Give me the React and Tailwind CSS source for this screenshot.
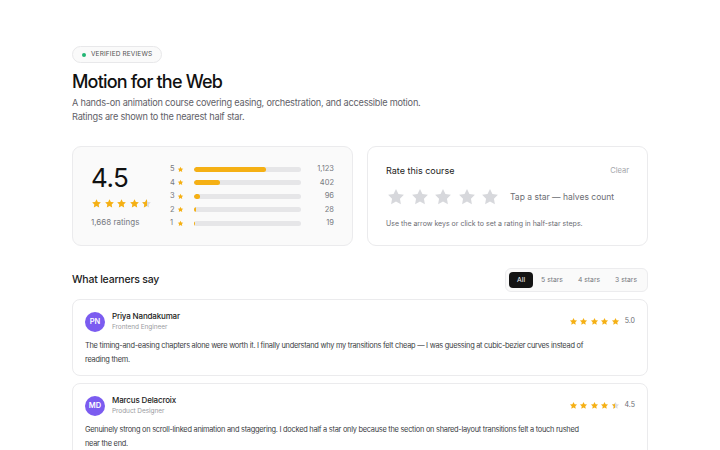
import React from "react";

const STAR = "M12 2.5l2.94 5.96 6.56.95-4.75 4.63 1.12 6.54L12 17.5l-5.870 3.08 1.12-6.54L2.5 9.41l6.56-.95L12 2.5z";

function Star({ size = 10, color = "#f5b014", half = false, empty = "#d9dbe0" }) {
  if (half) {
    return (
      <span className="relative block" style={{ width: size, height: size }}>
        <svg viewBox="0 0 24 24" width={size} height={size} className="absolute left-0 top-0">
          <path d={STAR} fill={empty} />
        </svg>
        <span className="absolute left-0 top-0 h-full overflow-hidden" style={{ width: size / 2 }}>
          <svg viewBox="0 0 24 24" width={size} height={size} className="block">
            <path d={STAR} fill={color} />
          </svg>
        </span>
      </span>
    );
  }
  return (
    <svg viewBox="0 0 24 24" width={size} height={size} className="block">
      <path d={STAR} fill={color} />
    </svg>
  );
}

function Stars({ value, size = 10, gap = "gap-[2px]" }) {
  const arr = [1, 2, 3, 4, 5];
  return (
    <div className={`flex items-center ${gap}`}>
      {arr.map((i) =>
        value >= i ? (
          <Star key={i} size={size} />
        ) : value >= i - 0.5 ? (
          <Star key={i} size={size} half />
        ) : (
          <Star key={i} size={size} color="#d9dbe0" />
        )
      )}
    </div>
  );
}

const hist = [
  { n: 5, c: "1,123", pct: 67.3 },
  { n: 4, c: "402", pct: 24.1 },
  { n: 3, c: "96", pct: 5.8 },
  { n: 2, c: "28", pct: 1.7 },
  { n: 1, c: "19", pct: 1.1 },
];

const reviews = [
  {
    init: "PN",
    name: "Priya Nandakumar",
    role: "Frontend Engineer",
    rating: 5,
    label: "5.0",
    text: "The timing-and-easing chapters alone were worth it. I finally understand why my transitions felt cheap — I was guessing at cubic-bezier curves instead of reading them.",
  },
  {
    init: "MD",
    name: "Marcus Delacroix",
    role: "Product Designer",
    rating: 4.5,
    label: "4.5",
    text: "Genuinely strong on scroll-linked animation and staggering. I docked half a star only because the section on shared-layout transitions felt a touch rushed near the end.",
  },
];

export default function App() {
  return (
    <div className="w-[720px] h-[450px] overflow-hidden bg-white text-[#111] font-['Inter','Liberation_Sans',sans-serif]">
      <div className="mx-auto w-[576px] pt-[46px]">
        <div className="flex w-fit items-center gap-[5px] rounded-full border border-[#e8e8ea] bg-[#fafafa] h-[17px] px-[9px]">
          <span className="w-[4px] h-[4px] rounded-full bg-[#22b573]" />
          <span className="text-[6.5px] tracking-[0.02em] text-[#555] uppercase leading-none">Verified reviews</span>
        </div>
        <h1 className="mt-[7px] text-[18px] leading-[24px] font-medium tracking-[-0.045em] text-[#111]">Motion for the Web</h1>
        <p className="mt-[2px] text-[9.2px] leading-[14px] tracking-[-0.025em] text-[#5f6168]">
          A hands-on animation course covering easing, orchestration, and accessible motion.
          <br />
          Ratings are shown to the nearest half star.
        </p>

        <div className="mt-[22px] grid grid-cols-2 gap-[14px]">
          <div className="h-[100px] rounded-[9px] border border-[#ebebed] bg-[#fafafa] flex items-center pl-[18px] pr-[18px]">
            <div className="w-[79px] flex flex-col">
              <div className="text-[26px] leading-[26px] font-normal tracking-[-0.02em] text-[#111]">4.5</div>
              <div className="mt-[7px]">
                <Stars value={4.5} size={11} gap="gap-[1.5px]" />
              </div>
              <div className="mt-[8px] text-[8px] leading-[10px] text-[#77797f]">1,668 ratings</div>
            </div>
            <div className="flex-1 flex flex-col gap-[4.5px]">
              {hist.map((h) => (
                <div key={h.n} className="flex items-center h-[9px]">
                  <span className="w-[6px] text-[7.5px] leading-none text-[#77797f]">{h.n}</span>
                  <span className="ml-[1px]">
                    <Star size={7} />
                  </span>
                  <div className="ml-[10px] w-[107px] h-[5px] rounded-full bg-[#e6e6e8] overflow-hidden">
                    <div className="h-full rounded-full bg-[#f5b014]" style={{ width: `${h.pct}%` }} />
                  </div>
                  <span className="flex-1 text-right text-[7.5px] leading-none text-[#77797f]">{h.c}</span>
                </div>
              ))}
            </div>
          </div>

          <div className="h-[100px] rounded-[9px] border border-[#ebebed] bg-white px-[18px] pt-[18px]">
            <div className="flex items-center justify-between">
              <span className="text-[9px] leading-[12px] text-[#222]">Rate this course</span>
              <span className="text-[7.5px] leading-[12px] text-[#a3a5aa]">Clear</span>
            </div>
            <div className="mt-[10px] flex items-center">
              <div className="flex items-center gap-[3.5px]">
                {[0, 1, 2, 3, 4].map((i) => (
                  <Star key={i} size={20} color="#d7d8dc" />
                ))}
              </div>
              <span className="ml-[10px] text-[8.5px] text-[#6b6d73]">Tap a star — halves count</span>
            </div>
            <div className="mt-[12px] text-[7px] leading-[10px] text-[#6b6d73]">
              Use the arrow keys or click to set a rating in half-star steps.
            </div>
          </div>
        </div>

        <div className="mt-[22px] flex items-center justify-between">
          <h2 className="text-[10.5px] font-medium tracking-[-0.02em] text-[#222]">What learners say</h2>
          <div className="flex items-center rounded-[6px] border border-[#ececee] bg-[#fafafa] p-[3px] gap-[1px]">
            <span className="rounded-[4px] bg-[#141414] text-white text-[6.8px] h-[16px] px-[8px] flex items-center">All</span>
            <span className="text-[#77797f] text-[6.8px] h-[16px] px-[7px] flex items-center">5 stars</span>
            <span className="text-[#77797f] text-[6.8px] h-[16px] px-[7px] flex items-center">4 stars</span>
            <span className="text-[#77797f] text-[6.8px] h-[16px] px-[7px] flex items-center">3 stars</span>
          </div>
        </div>

        <div className="mt-[7px] flex flex-col gap-[7px]">
          {reviews.map((r) => (
            <div key={r.name} className="rounded-[8px] border border-[#ebebed] bg-white px-[12px] pt-[11px] pb-[9px]">
              <div className="flex items-center">
                <div className="w-[20px] h-[20px] rounded-full bg-[#7b5cf0] text-white text-[7.5px] font-semibold flex items-center justify-center">
                  {r.init}
                </div>
                <div className="ml-[7px] flex flex-col">
                  <span className="text-[8px] leading-[11px] font-medium tracking-[-0.02em] text-[#1a1a1a]">{r.name}</span>
                  <span className="text-[6.5px] leading-[10px] tracking-[-0.01em] text-[#9a9ca1]">{r.role}</span>
                </div>
                <div className="ml-auto flex items-center gap-[5px]">
                  <Stars value={r.rating} size={9} gap="gap-[1.5px]" />
                  <span className="text-[7px] text-[#6b6d73]">{r.label}</span>
                </div>
              </div>
              <p className="mt-[7px] max-w-[505px] text-[7.4px] leading-[13.5px] tracking-[-0.035em] text-[#3a3c42]">{r.text}</p>
            </div>
          ))}
        </div>
      </div>
    </div>
  );
}
